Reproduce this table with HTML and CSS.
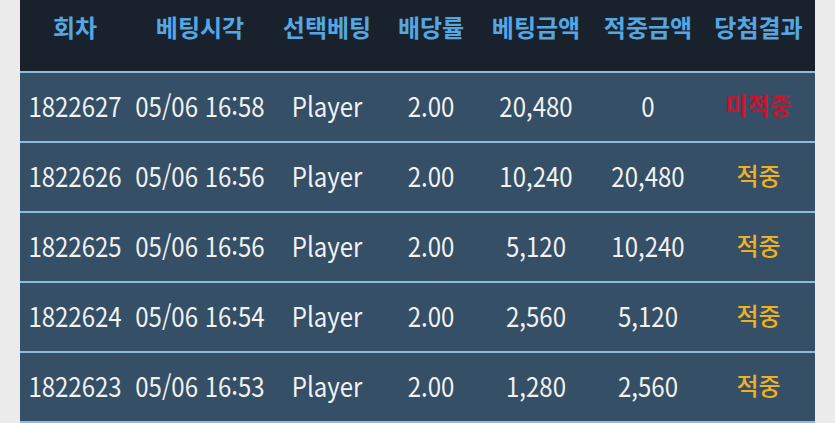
FILE: index.html
```html
<!DOCTYPE html>
<html lang="ko">
<head>
<meta charset="utf-8">
<link rel="stylesheet" href="styles.css">
</head>
<body>
<div class="table">
  <div class="row head">
    <div>회차</div><div>베팅시각</div><div>선택베팅</div><div>배당률</div><div>베팅금액</div><div>적중금액</div><div>당첨결과</div>
  </div>
  <div class="row">
    <div class="num">1822627</div><div class="num">05/06 16:58</div><div class="num">Player</div><div class="num">2.00</div><div class="num">20,480</div><div class="num">0</div><div class="lose">미적중</div>
  </div>
  <div class="row">
    <div class="num">1822626</div><div class="num">05/06 16:56</div><div class="num">Player</div><div class="num">2.00</div><div class="num">10,240</div><div class="num">20,480</div><div class="win">적중</div>
  </div>
  <div class="row">
    <div class="num">1822625</div><div class="num">05/06 16:56</div><div class="num">Player</div><div class="num">2.00</div><div class="num">5,120</div><div class="num">10,240</div><div class="win">적중</div>
  </div>
  <div class="row">
    <div class="num">1822624</div><div class="num">05/06 16:54</div><div class="num">Player</div><div class="num">2.00</div><div class="num">2,560</div><div class="num">5,120</div><div class="win">적중</div>
  </div>
  <div class="row">
    <div class="num">1822623</div><div class="num">05/06 16:53</div><div class="num">Player</div><div class="num">2.00</div><div class="num">1,280</div><div class="num">2,560</div><div class="win">적중</div>
  </div>
</div>
</body>
</html>
```
FILE: styles.css
```css
html, body {
  margin: 0;
  padding: 0;
  background: #ebebeb;
  height: 423px;
  overflow: hidden;
}
.table {
  margin: 0 20px;
  font-family: "Noto Sans CJK KR", "Noto Sans", sans-serif;
}
.row {
  display: grid;
  grid-template-columns: 110px 140px 114px 94px 116px 108px 113px;
  height: 62px;
  padding-bottom: 6px;
  align-items: center;
  background: #344f66;
  border-bottom: 2px solid #8dbcdb;
  color: #f2f2f2;
  font-size: 24px;
  text-align: center;
  white-space: nowrap;
}
.num {
  transform: scaleY(1.14);
  transform-origin: 50% 40%;
}
.row.head {
  height: 71px;
  padding-bottom: 0;
  align-items: start;
  background: #19222c;
  color: #55a7e3;
  font-size: 24px;
  font-weight: 700;
  line-height: 30px;
}
.row.head > div {
  padding-top: 12px;
}
.lose {
  color: #c8152a;
  font-weight: 700;
  font-size: 24px;
}
.win {
  color: #f0b021;
  font-weight: 500;
  font-size: 24px;
}
```
